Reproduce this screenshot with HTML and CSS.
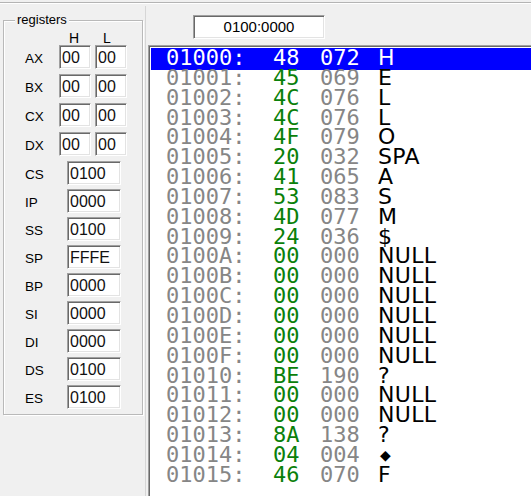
FILE: index.html
```html
<!DOCTYPE html>
<html>
<head>
<meta charset="utf-8">
<link rel="stylesheet" href="styles.css">
</head>
<body>
<div class="app">
  <div class="topline"></div>
  <div class="main">
    <div class="left">
      <div class="group">
        <span class="legend">registers</span>
        <div class="hl"><span>H</span><span>L</span></div>
        <div class="pair"><span class="lbl">AX</span><div class="box b8">00</div><div class="box b8">00</div></div>
        <div class="pair"><span class="lbl">BX</span><div class="box b8">00</div><div class="box b8">00</div></div>
        <div class="pair"><span class="lbl">CX</span><div class="box b8">00</div><div class="box b8">00</div></div>
        <div class="pair"><span class="lbl">DX</span><div class="box b8">00</div><div class="box b8">00</div></div>
        <div class="seg first"><span class="lbl">CS</span><div class="box b16">0100</div></div>
        <div class="seg"><span class="lbl">IP</span><div class="box b16">0000</div></div>
        <div class="seg"><span class="lbl">SS</span><div class="box b16">0100</div></div>
        <div class="seg"><span class="lbl">SP</span><div class="box b16">FFFE</div></div>
        <div class="seg"><span class="lbl">BP</span><div class="box b16">0000</div></div>
        <div class="seg"><span class="lbl">SI</span><div class="box b16">0000</div></div>
        <div class="seg"><span class="lbl">DI</span><div class="box b16">0000</div></div>
        <div class="seg"><span class="lbl">DS</span><div class="box b16">0100</div></div>
        <div class="seg"><span class="lbl">ES</span><div class="box b16">0100</div></div>
      </div>
    </div>
    <div class="right">
      <div class="addr">0100:0000</div>
      <div class="list">
        <div class="row sel"><span class="a">01000:</span><span class="x">48</span><span class="d">072</span><span class="c">H</span></div>
        <div class="row"><span class="a">01001:</span><span class="x">45</span><span class="d">069</span><span class="c">E</span></div>
        <div class="row"><span class="a">01002:</span><span class="x">4C</span><span class="d">076</span><span class="c">L</span></div>
        <div class="row"><span class="a">01003:</span><span class="x">4C</span><span class="d">076</span><span class="c">L</span></div>
        <div class="row"><span class="a">01004:</span><span class="x">4F</span><span class="d">079</span><span class="c">O</span></div>
        <div class="row"><span class="a">01005:</span><span class="x">20</span><span class="d">032</span><span class="c">SPA</span></div>
        <div class="row"><span class="a">01006:</span><span class="x">41</span><span class="d">065</span><span class="c">A</span></div>
        <div class="row"><span class="a">01007:</span><span class="x">53</span><span class="d">083</span><span class="c">S</span></div>
        <div class="row"><span class="a">01008:</span><span class="x">4D</span><span class="d">077</span><span class="c">M</span></div>
        <div class="row"><span class="a">01009:</span><span class="x">24</span><span class="d">036</span><span class="c">$</span></div>
        <div class="row"><span class="a">0100A:</span><span class="x">00</span><span class="d">000</span><span class="c">NULL</span></div>
        <div class="row"><span class="a">0100B:</span><span class="x">00</span><span class="d">000</span><span class="c">NULL</span></div>
        <div class="row"><span class="a">0100C:</span><span class="x">00</span><span class="d">000</span><span class="c">NULL</span></div>
        <div class="row"><span class="a">0100D:</span><span class="x">00</span><span class="d">000</span><span class="c">NULL</span></div>
        <div class="row"><span class="a">0100E:</span><span class="x">00</span><span class="d">000</span><span class="c">NULL</span></div>
        <div class="row"><span class="a">0100F:</span><span class="x">00</span><span class="d">000</span><span class="c">NULL</span></div>
        <div class="row"><span class="a">01010:</span><span class="x">BE</span><span class="d">190</span><span class="c">?</span></div>
        <div class="row"><span class="a">01011:</span><span class="x">00</span><span class="d">000</span><span class="c">NULL</span></div>
        <div class="row"><span class="a">01012:</span><span class="x">00</span><span class="d">000</span><span class="c">NULL</span></div>
        <div class="row"><span class="a">01013:</span><span class="x">8A</span><span class="d">138</span><span class="c">?</span></div>
        <div class="row"><span class="a">01014:</span><span class="x">04</span><span class="d">004</span><span class="c"><span class="dia">&#9670;</span></span></div>
        <div class="row"><span class="a">01015:</span><span class="x">46</span><span class="d">070</span><span class="c">F</span></div>
      </div>
    </div>
  </div>
</div>
</body>
</html>
```

FILE: styles.css
```css
html, body {
  margin: 0;
  padding: 0;
}
body {
  background: #f0f0f0;
  width: 531px;
  height: 496px;
  overflow: hidden;
  font-family: "Liberation Sans", Arial, sans-serif;
  color: #000;
}
.app {
  height: 496px;
  display: flex;
  flex-direction: column;
}
.topline {
  margin-top: 2px;
  height: 0;
  border-top: 1px solid #b4b4b4;
  border-bottom: 1px solid #ffffff;
}
.main {
  flex: 1;
  display: flex;
  min-height: 0;
}
.left {
  width: 145px;
  flex: none;
  box-sizing: border-box;
  padding: 16px 0 0 3px;
}
.group {
  position: relative;
  box-sizing: border-box;
  width: 140px;
  border: 1px solid #b9b9b9;
  box-shadow: 1px 1px 0 #ffffff, inset 1px 1px 0 #ffffff;
  padding: 10px 0 1px 0;
}
.legend {
  position: absolute;
  left: 11px;
  top: -9px;
  padding: 0 2px;
  background: #f0f0f0;
  font-size: 13px;
  line-height: 16px;
}
.hl {
  display: flex;
  height: 14px;
  line-height: 14px;
  font-size: 14px;
  padding-left: 54px;
  gap: 1px;
}
.hl span {
  width: 32px;
  text-align: center;
}
.pair, .seg {
  display: flex;
  align-items: center;
  height: 24px;
}
.pair {
  margin-bottom: 5px;
}
.seg {
  margin-bottom: 4px;
}
.seg.first {
  margin-top: 1px;
}
.lbl {
  margin-left: 21px;
  font-size: 13.5px;
  padding-top: 2px;
}
.pair .lbl {
  width: 34px;
}
.seg .lbl {
  width: 42px;
}
.box {
  box-sizing: border-box;
  height: 24px;
  background: #ffffff;
  border-style: solid;
  border-width: 1px;
  border-color: #a0a0a0 #ffffff #ffffff #a0a0a0;
  box-shadow: inset 1px 1px 0 #696969, inset -1px -1px 0 #e3e3e3;
  font-size: 16px;
  line-height: 23px;
  padding-left: 2px;
  color: #111;
}
.b8 {
  width: 32px;
  margin-right: 4px;
}
.b16 {
  width: 54px;
}
.right {
  flex: 1;
  display: flex;
  flex-direction: column;
  min-width: 0;
  border-left: 1px solid #d6d6d6;
  margin-top: 2px;
}
.addr {
  box-sizing: border-box;
  margin: 9px 0 0 47px;
  width: 132px;
  height: 24px;
  background: #ffffff;
  border-style: solid;
  border-width: 1px;
  border-color: #a0a0a0 #ffffff #ffffff #a0a0a0;
  box-shadow: inset 1px 1px 0 #696969, inset -1px -1px 0 #e3e3e3;
  font-size: 15px;
  line-height: 22px;
  text-align: center;
}
.list {
  flex: 1;
  margin: 6px -20px 0 2px;
  background: #ffffff;
  border-top: 1px solid #a0a0a0;
  border-left: 1px solid #a0a0a0;
  box-shadow: inset 1px 1px 0 #696969;
  padding: 2px 0 0 2px;
  overflow: hidden;
}
.row {
  display: grid;
  grid-template-columns: 107px 47px 58px auto;
  padding-left: 15px;
  height: 19.85px;
  line-height: 19.85px;
  font-family: "DejaVu Sans Mono", monospace;
  font-size: 22px;
  white-space: nowrap;
}
.row.sel {
  background: #0000ff;
  box-shadow: 0 2px 0 #0000ff;
}
.a, .d {
  color: #868686;
}
.x {
  color: #0a800a;
}
.c {
  color: #000000;
  font-family: "DejaVu Sans", sans-serif;
  letter-spacing: 0.3px;
}
.row.sel span {
  color: #ffffff;
}
.dia {
  font-size: 14px;
  position: relative;
  left: 2px;
  top: -2px;
}
```
